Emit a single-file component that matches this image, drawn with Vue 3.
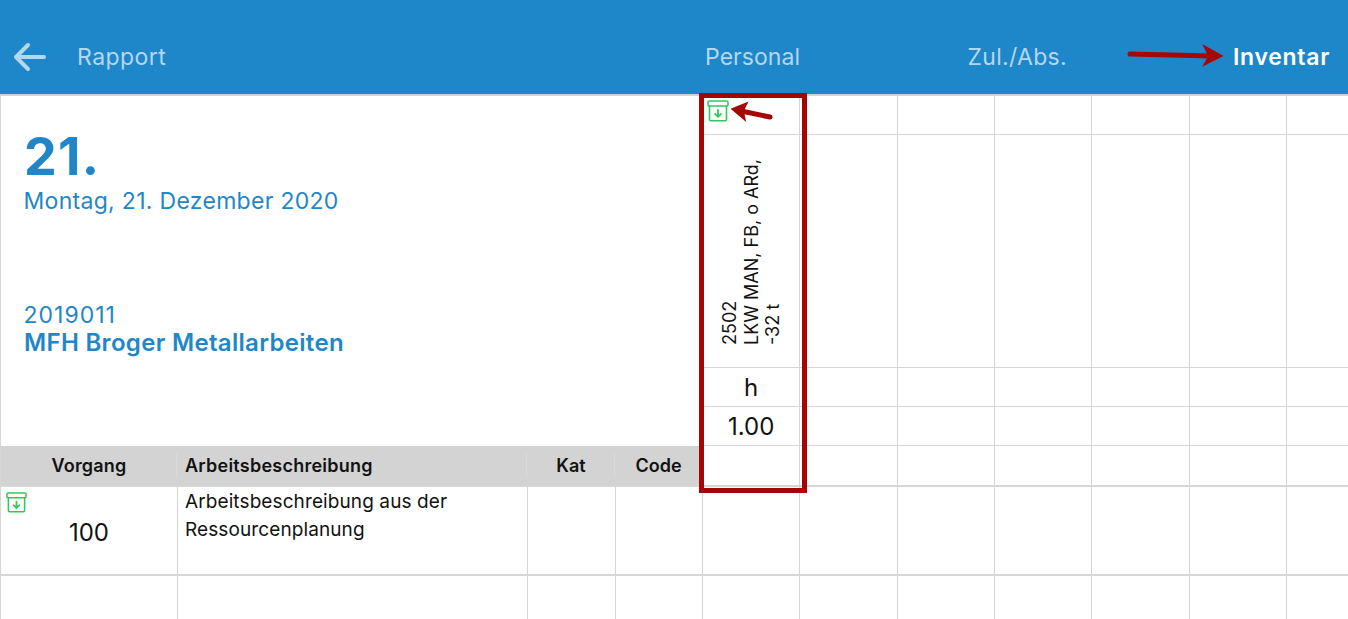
<script setup>
const columns = [0, 1, 2, 3, 4, 5, 6]
</script>

<template>
  <div class="page">
    <header class="topbar">
      <svg class="back" width="34" height="30" viewBox="0 0 34 30" fill="none" stroke="#b5d7ee" stroke-width="4" stroke-linecap="round" stroke-linejoin="round">
        <path d="M31 15H3.5M15 3L3 15L15 27" />
      </svg>
      <span class="tab rapport">Rapport</span>
      <span class="tab personal">Personal</span>
      <span class="tab zul">Zul./Abs.</span>
      <span class="tab active">Inventar</span>
    </header>

    <main class="sheet">
      <section class="upper">
        <div class="info">
          <div class="summary">
            <div class="day">21.</div>
            <div class="date">Montag, 21. Dezember 2020</div>
            <div class="number">2019011</div>
            <div class="project">MFH Broger Metallarbeiten</div>
          </div>
          <div class="thead">
            <div class="th c1">Vorgang</div>
            <div class="th c2">Arbeitsbeschreibung</div>
            <div class="th c3">Kat</div>
            <div class="th c4">Code</div>
          </div>
        </div>
        <div v-for="col in columns" :key="col" class="rescol">
          <div class="rc r-icon">
            <svg v-if="col === 0" class="archive" viewBox="0 0 22 22" fill="none" stroke="#2fc95c" stroke-width="1.6" stroke-linecap="round" stroke-linejoin="round">
              <rect x="1" y="1" width="20" height="5" rx="1.4" />
              <path d="M2.5 6V19.2A1.6 1.6 0 0 0 4.1 20.8H17.9A1.6 1.6 0 0 0 19.5 19.2V6" />
              <path d="M11 10V16.5M8 13.8L11 16.8L14 13.8" stroke-width="1.8" />
            </svg>
          </div>
          <div class="rc r-name">
            <div v-if="col === 0" class="vertical">2502<br />LKW MAN, FB, o ARd,<br />-32 t</div>
          </div>
          <div class="rc r-val">{{ col === 0 ? 'h' : '' }}</div>
          <div class="rc r-val">{{ col === 0 ? '1.00' : '' }}</div>
          <div class="rc r-end"></div>
        </div>
      </section>

      <section class="row first">
        <div class="td c1 vorgang">
          <svg class="archive small" viewBox="0 0 22 22" fill="none" stroke="#2fc95c" stroke-width="1.6" stroke-linecap="round" stroke-linejoin="round">
            <rect x="1" y="1" width="20" height="5" rx="1.4" />
            <path d="M2.5 6V19.2A1.6 1.6 0 0 0 4.1 20.8H17.9A1.6 1.6 0 0 0 19.5 19.2V6" />
            <path d="M11 10V16.5M8 13.8L11 16.8L14 13.8" stroke-width="1.8" />
          </svg>
          <span>100</span>
        </div>
        <div class="td c2 desc">Arbeitsbeschreibung aus der Ressourcenplanung</div>
        <div class="td c3"></div>
        <div class="td c4"></div>
        <div v-for="col in columns" :key="col" class="td cx"></div>
      </section>

      <section class="row second">
        <div class="td c1"></div>
        <div class="td c2"></div>
        <div class="td c3"></div>
        <div class="td c4"></div>
        <div v-for="col in columns" :key="col" class="td cx"></div>
      </section>
    </main>

    <div class="highlight"></div>
    <svg class="marks" width="1348" height="619" viewBox="0 0 1348 619" fill="none" stroke="#a70606" stroke-linecap="round" stroke-linejoin="miter">
      <path d="M1130 54L1212 56" stroke-width="5" />
      <path d="M1204 46L1222 56L1204 65L1209 56Z" fill="#a70606" stroke-width="1.5" />
      <path d="M770 117L741 111" stroke-width="5" />
      <path d="M747 103L732 109L745 120L743 111Z" fill="#a70606" stroke-width="1.5" />
    </svg>
  </div>
</template>

<style scoped>
.page {
  position: relative;
  width: 1348px;
  height: 619px;
  overflow: hidden;
  background: #fff;
  font-family: Inter, "Liberation Sans", sans-serif;
  color: #121212;
}
.topbar {
  display: flex;
  align-items: center;
  height: 96px;
  padding-top: 20px;
  box-sizing: border-box;
  background: #1e87ca;
  border-bottom: 2px solid #c6d6e2;
}
.back {
  margin-left: 13px;
  flex: none;
}
.tab {
  font-size: 23px;
  color: #b5d7ee;
  white-space: nowrap;
}
.rapport {
  margin-left: 30px;
  width: 628px;
  letter-spacing: 0.45px;
}
.personal {
  width: 262.5px;
  letter-spacing: 0.06px;
}
.zul {
  width: 265.5px;
  letter-spacing: 0.3px;
}
.active {
  color: #fff;
  font-weight: 600;
  letter-spacing: 0.7px;
}
.sheet {
  display: flex;
  flex-direction: column;
  border-left: 1px solid #d6d6d6;
}
.upper {
  display: flex;
  border-bottom: 2px solid #d6d6d6;
}
.info {
  flex: none;
  width: 701px;
  display: flex;
  flex-direction: column;
}
.summary {
  height: 349px;
  padding: 31px 0 0 23px;
  box-sizing: border-box;
  color: #1f86c8;
}
.day {
  font-size: 52px;
  font-weight: 700;
  line-height: 59px;
  letter-spacing: 1.3px;
}
.date {
  font-size: 23px;
  line-height: 30px;
  letter-spacing: 0.3px;
  margin-left: -0.5px;
}
.number {
  margin-top: 85px;
  font-size: 23px;
  line-height: 28px;
  letter-spacing: 1px;
  margin-left: -0.5px;
}
.project {
  font-size: 24px;
  font-weight: 600;
  line-height: 28px;
  letter-spacing: 0.32px;
}
.thead {
  display: flex;
  flex: 1;
  background: #d3d3d3;
  margin-top: 1px;
}
.th {
  display: flex;
  align-items: center;
  justify-content: center;
  font-size: 18px;
  font-weight: 600;
  box-sizing: border-box;
  position: relative;
}
.th + .th::before {
  content: "";
  position: absolute;
  left: -1px;
  top: 7px;
  bottom: 7px;
  width: 1px;
  background: #dadada;
}
.th.c1 {
  letter-spacing: 0.2px;
}
.th.c2 {
  justify-content: flex-start;
  padding-left: 8px;
  letter-spacing: 0.25px;
}
.c1 { width: 176px; flex: none; }
.c2 { width: 350px; flex: none; }
.c3 { width: 88px; flex: none; }
.c4 { width: 87px; flex: none; }
.rescol {
  flex: none;
  width: 97.33px;
  box-sizing: border-box;
  border-left: 1px solid #d6d6d6;
}
.rc {
  box-sizing: border-box;
  border-bottom: 1px solid #d6d6d6;
}
.r-icon {
  height: 39px;
  padding: 4px 0 0 4px;
}
.archive {
  display: block;
  width: 22px;
  height: 22px;
}
.r-name {
  height: 233px;
  display: flex;
  justify-content: center;
  padding-bottom: 22px;
}
.vertical {
  writing-mode: vertical-rl;
  transform: rotate(180deg);
  font-size: 18px;
  line-height: 21.5px;
  white-space: nowrap;
  text-align: left;
}
.r-val {
  height: 39px;
  display: flex;
  align-items: center;
  justify-content: center;
  font-size: 24px;
}
.r-end {
  height: 39px;
  border-bottom: 0;
}
.row {
  display: flex;
}
.first {
  height: 89px;
  border-bottom: 2px solid #d6d6d6;
  box-sizing: border-box;
}
.second {
  height: 60px;
}
.td {
  box-sizing: border-box;
}
.td + .td {
  border-left: 1px solid #d6d6d6;
}
.cx {
  flex: none;
  width: 97.33px;
}
.vorgang {
  position: relative;
  font-size: 24px;
  text-align: center;
  padding-top: 31px;
}
.archive.small {
  position: absolute;
  left: 5px;
  top: 5px;
  width: 21px;
  height: 21px;
}
.desc {
  padding: 1px 30px 0 7px;
  font-size: 19px;
  line-height: 27.5px;
  letter-spacing: 0.1px;
}
.highlight {
  position: absolute;
  left: 699px;
  top: 93px;
  width: 108px;
  height: 400px;
  box-sizing: border-box;
  border: 5px solid #a50505;
}
.marks {
  position: absolute;
  left: 0;
  top: 0;
  pointer-events: none;
}
</style>
